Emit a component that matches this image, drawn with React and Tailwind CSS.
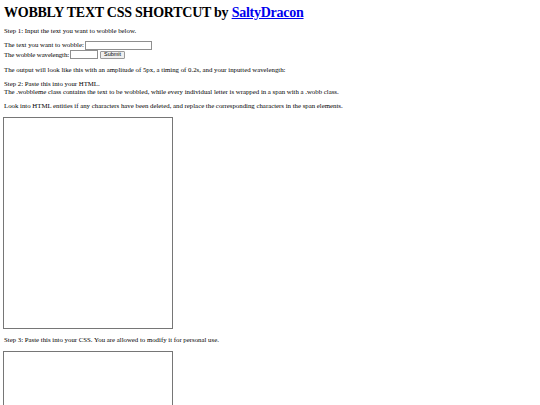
export default function App() {
  return (
    <div className="min-h-screen bg-white pl-[4px] pt-[3.6px] font-['Liberation_Serif',serif] text-[6.8px] leading-[8.5px] text-black">
      <h1 className="text-[14px] font-bold leading-[17px] tracking-[-0.25px]">
        WOBBLY TEXT CSS SHORTCUT by{" "}
        <a href="#" className="text-[#0000ee] underline">
          SaltyDracon
        </a>
      </h1>
      <p className="mt-[6.6px]">Step 1: Input the text you want to wobble below.</p>
      <div className="mt-[5px] flex items-center h-[9.5px]">
        <span>The text you want to wobble:</span>
        <input
          type="text"
          className="ml-[1px] h-[9px] w-[67px] border border-[#8f8f8f] bg-white"
        />
      </div>
      <div className="flex items-center h-[9.5px]">
        <span className="tracking-[-0.1px]">The wobble wavelength:</span>
        <input
          type="text"
          className="ml-[1px] h-[9px] w-[28px] border border-[#8f8f8f] bg-white"
        />
        <button className="ml-[2px] flex h-[8.5px] w-[25px] items-center justify-center rounded-[1px] border border-[#9a9a9a] bg-[#efefef] font-['Liberation_Sans',sans-serif] text-[5.4px] leading-none">
          Submit
        </button>
      </div>
      <p className="mt-[6.6px]">
        The output will look like this with an amplitude of 5px, a timing of 0.2s, and your inputted wavelength:
      </p>
      <p className="mt-[4.8px]">
        Step 2: Paste this into your HTML.
        <br />
        The .wobbleme class contains the text to be wobbled, while every individual letter is wrapped in a span with a .wobb class.
      </p>
      <p className="mt-[5px]">
        Look into HTML entities if any characters have been deleted, and replace the corresponding characters in the span elements.
      </p>
      <textarea
        readOnly
        className="mt-[7px] -ml-[1px] block h-[212px] w-[170px] resize-none border border-[#767676] bg-white"
      />
      <p className="mt-[6.5px]">Step 3: Paste this into your CSS. You are allowed to modify it for personal use.</p>
      <textarea
        readOnly
        className="mt-[7px] -ml-[1px] block h-[212px] w-[170px] resize-none border border-[#767676] bg-white"
      />
    </div>
  );
}
